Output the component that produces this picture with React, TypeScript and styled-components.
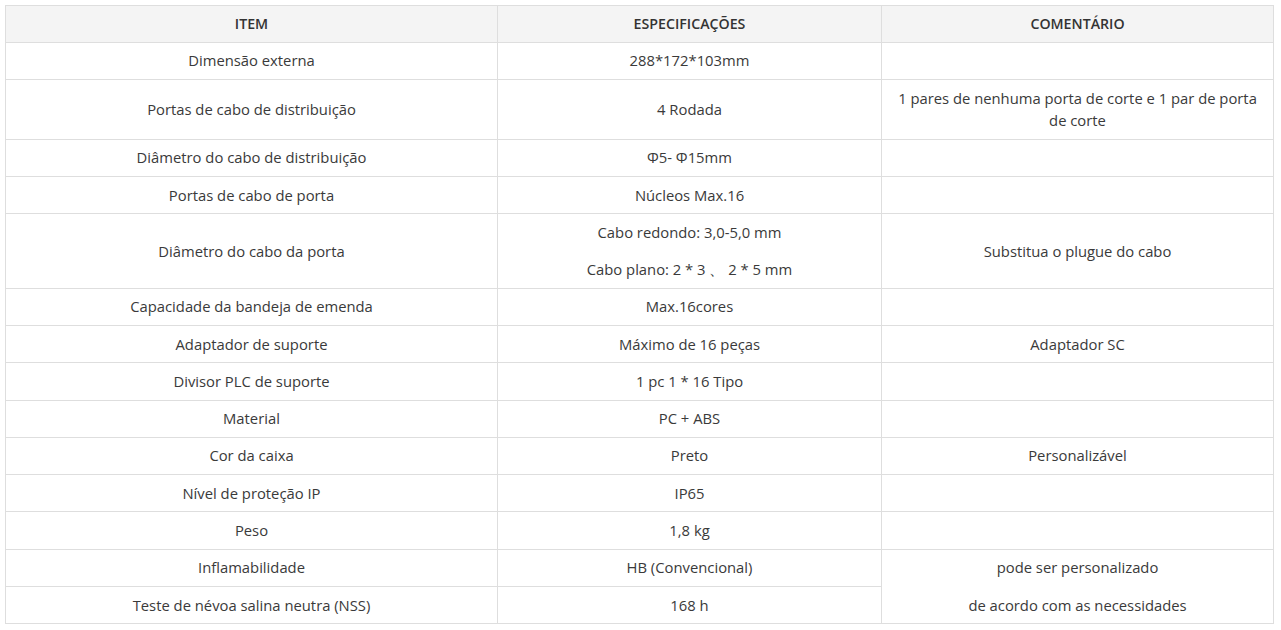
import React from "react";
import styled, { createGlobalStyle } from "styled-components";

const Global = createGlobalStyle`
  html, body { margin: 0; padding: 0; background: #fff; }
  body { font-family: "Open Sans", "Liberation Sans", sans-serif; color: #333; }
`;

const Wrap = styled.div`
  padding: 5px;
`;

const Table = styled.table`
  width: 1268px;
  border-collapse: collapse;
  table-layout: fixed;
  font-size: 14.8px;
  line-height: 22.4px;
`;

const Th = styled.th`
  background: #f4f4f4;
  border: 1px solid #dedede;
  padding: 6.5px 10px 7px;
  font-size: 14.2px;
  font-weight: 600;
  color: #333;
  text-align: center;
  text-transform: uppercase;
`;

const Td = styled.td`
  border: 1px solid #dedede;
  padding: 6.5px 10px 7.35px;
  text-align: center;
  vertical-align: middle;
  color: #3a3a3a;
  font-weight: 400;
`;

const P = styled.p`
  margin: 0;
  & + & { margin-top: 15px; }
`;

type Row = { item: string; spec: React.ReactNode; comment?: React.ReactNode; span?: number; skip?: boolean };

const rows: Row[] = [
  { item: "Dimensão externa", spec: "288*172*103mm", comment: "" },
  { item: "Portas de cabo de distribuição", spec: "4 Rodada", comment: "1 pares de nenhuma porta de corte e 1 par de porta de corte" },
  { item: "Diâmetro do cabo de distribuição", spec: "Φ5- Φ15mm", comment: "" },
  { item: "Portas de cabo de porta", spec: "Núcleos Max.16", comment: "" },
  {
    item: "Diâmetro do cabo da porta",
    spec: (
      <>
        <P>Cabo redondo: 3,0-5,0 mm</P>
        <P>Cabo plano: 2 * 3 、 2 * 5 mm</P>
      </>
    ),
    comment: "Substitua o plugue do cabo",
  },
  { item: "Capacidade da bandeja de emenda", spec: "Max.16cores", comment: "" },
  { item: "Adaptador de suporte", spec: "Máximo de 16 peças", comment: "Adaptador SC" },
  { item: "Divisor PLC de suporte", spec: "1 pc 1 * 16 Tipo", comment: "" },
  { item: "Material", spec: "PC + ABS", comment: "" },
  { item: "Cor da caixa", spec: "Preto", comment: "Personalizável" },
  { item: "Nível de proteção IP", spec: "IP65", comment: "" },
  { item: "Peso", spec: "1,8 kg", comment: "" },
  {
    item: "Inflamabilidade",
    spec: "HB (Convencional)",
    span: 2,
    comment: (
      <>
        <P>pode ser personalizado</P>
        <P>de acordo com as necessidades</P>
      </>
    ),
  },
  { item: "Teste de névoa salina neutra (NSS)", spec: "168 h", skip: true },
];

export default function App() {
  return (
    <Wrap>
      <Global />
      <Table>
        <colgroup>
          <col style={{ width: 492 }} />
          <col style={{ width: 384 }} />
          <col style={{ width: 392 }} />
        </colgroup>
        <thead>
          <tr>
            <Th>Item</Th>
            <Th>Especificações</Th>
            <Th>Comentário</Th>
          </tr>
        </thead>
        <tbody>
          {rows.map((r, i) => (
            <tr key={i}>
              <Td>{r.item}</Td>
              <Td>{r.spec}</Td>
              {!r.skip && <Td rowSpan={r.span}>{r.comment}</Td>}
            </tr>
          ))}
        </tbody>
      </Table>
    </Wrap>
  );
}
